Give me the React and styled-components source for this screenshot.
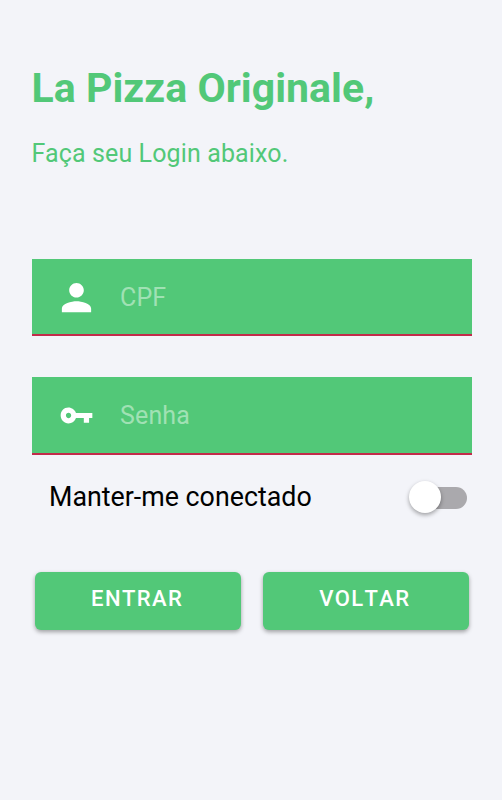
import React from 'react'
import styled, { createGlobalStyle } from 'styled-components'
import { IoMdKey, IoMdPerson } from 'react-icons/io'

const colors = {
  background: '#f3f4f9',
  primary: '#52c878',
  placeholder: '#a0e1b4',
  danger: '#c22b4a',
}

const GlobalStyle = createGlobalStyle`
  * {
    box-sizing: border-box;
  }
  body {
    margin: 0;
    background: ${colors.background};
    font-family: Roboto, sans-serif;
  }
`

const Screen = styled.main`
  min-height: 100vh;
  padding: 64px 30px 0 32px;
`

const Title = styled.h1`
  margin: 0 0 0 -0.5px;
  font-size: 41px;
  line-height: 48px;
  letter-spacing: 0.05px;
  font-weight: 700;
  color: ${colors.primary};
  white-space: nowrap;
`

const Subtitle = styled.p`
  margin: 27px 0 90px -0.5px;
  font-size: 25px;
  line-height: 30px;
  letter-spacing: 0.12px;
  color: ${colors.primary};
`

const Field = styled.label`
  display: flex;
  align-items: center;
  height: ${props => props.$height}px;
  margin-bottom: ${props => props.$gap}px;
  padding: 1px 0 0 24.5px;
  background: ${colors.primary};
  border-bottom: 2px solid ${colors.danger};
  color: #fff;
`

const Input = styled.input`
  flex: 1;
  min-width: 0;
  margin-left: 24.5px;
  padding: ${props => props.$offset || 0}px 0 0;
  border: 0;
  outline: 0;
  background: transparent;
  font: 400 25px/30px Roboto, sans-serif;
  letter-spacing: 0.15px;
  color: #fff;
  &::placeholder {
    color: ${colors.placeholder};
    opacity: 1;
  }
`

const Remember = styled.div`
  display: flex;
  align-items: center;
  justify-content: space-between;
  height: 84px;
  padding: 0 5.5px 0 17px;
  font-size: 26.8px;
  color: #000;
`

const Track = styled.button`
  display: flex;
  align-items: center;
  width: 52px;
  height: 22px;
  margin-top: 1px;
  padding: 0;
  border: 0;
  border-radius: 11px;
  background: #aaa9ad;
`

const Thumb = styled.span`
  flex: none;
  width: 32px;
  height: 32px;
  margin: -1px 0 0 -5.5px;
  border-radius: 50%;
  background: #fff;
  box-shadow: 0 2px 4px rgba(0, 0, 0, 0.35);
`

const Actions = styled.div`
  display: flex;
  gap: 22px;
  padding: 33px 3.5px 0 3px;
`

const Button = styled.button`
  flex: 1;
  height: 58px;
  padding: 0 1.5px 5px 0;
  border: 0;
  border-radius: 6px;
  background: ${colors.primary};
  box-shadow: 0 2px 4px rgba(0, 0, 0, 0.35);
  font: 500 22px Roboto, sans-serif;
  font-kerning: none;
  letter-spacing: 1.4px;
  color: #fff;
`

export default function App () {
  return (
    <Screen>
      <GlobalStyle />
      <Title>La Pizza Originale,</Title>
      <Subtitle>Faça seu Login abaixo.</Subtitle>
      <Field $height={77} $gap={41}>
        <IoMdPerson size={39} />
        <Input placeholder='CPF' $offset={1} />
      </Field>
      <Field $height={78} $gap={0}>
        <IoMdKey size={39} />
        <Input type='password' placeholder='Senha' />
      </Field>
      <Remember>
        <span>Manter-me conectado</span>
        <Track type='button' role='switch' aria-checked='false' aria-label='Manter-me conectado'>
          <Thumb />
        </Track>
      </Remember>
      <Actions>
        <Button type='button'>ENTRAR</Button>
        <Button type='button'>VOLTAR</Button>
      </Actions>
    </Screen>
  )
}
